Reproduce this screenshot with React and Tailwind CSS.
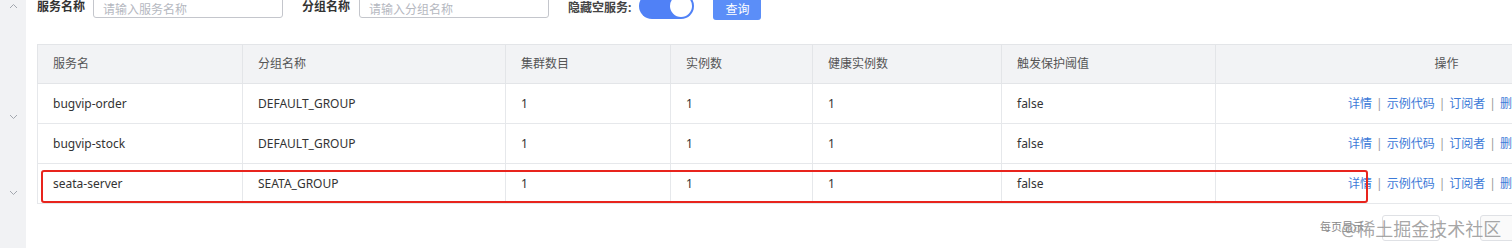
import React from 'react';

const COLS = [
  { key: 'name', label: '服务名', w: 'w-[205px]' },
  { key: 'group', label: '分组名称', w: 'w-[263px]' },
  { key: 'clusters', label: '集群数目', w: 'w-[165px]' },
  { key: 'instances', label: '实例数', w: 'w-[142px]' },
  { key: 'healthy', label: '健康实例数', w: 'w-[189px]' },
  { key: 'threshold', label: '触发保护阈值', w: 'w-[214px]' },
];

const ROWS = [
  { name: 'bugvip-order', group: 'DEFAULT_GROUP', clusters: 1, instances: 1, healthy: 1, threshold: 'false' },
  { name: 'bugvip-stock', group: 'DEFAULT_GROUP', clusters: 1, instances: 1, healthy: 1, threshold: 'false' },
  { name: 'seata-server', group: 'SEATA_GROUP', clusters: 1, instances: 1, healthy: 1, threshold: 'false' },
];

const Chevron = ({ up }) => (
  <svg width="9" height="6" viewBox="0 0 9 6" fill="none" stroke="#a3a7ae" strokeWidth="1">
    {up ? <path d="M1 5 L4.5 1.5 L8 5" /> : <path d="M1 1 L4.5 4.5 L8 1" />}
  </svg>
);

const Actions = () => (
  <div className="flex items-center justify-end gap-[4px] whitespace-nowrap text-[#3c7ad8]">
    <span>详情</span>
    <span className="text-[#999]">|</span>
    <span>示例代码</span>
    <span className="text-[#999]">|</span>
    <span>订阅者</span>
    <span className="text-[#999]">|</span>
    <span>删除</span>
  </div>
);

export default function App() {
  return (
    <div className="flex h-[248px] w-[1512px] overflow-hidden bg-white font-['Noto_Sans','Noto_Sans_CJK_SC',sans-serif] text-[12px] text-[#333]">
      {/* side menu strip */}
      <div className="flex w-[26px] shrink-0 flex-col items-center bg-[#f1f2f4]">
        <div className="mt-[3px]"><Chevron up /></div>
        <div className="mt-[105px]"><Chevron /></div>
        <div className="mt-[70px]"><Chevron /></div>
      </div>

      <div className="flex min-w-0 flex-1 flex-col pl-[11px]">
        {/* search bar */}
        <div className="-mt-[10px] flex h-[28px] items-center whitespace-nowrap">
          <span className="mt-[6px] mr-[8px] font-bold text-[#333]">服务名称</span>
          <div className="flex h-[28px] w-[190px] shrink-0 items-center rounded-[3px] border border-[#c4c6cc] px-[9px] pt-[12px] text-[#b5b8bf]">请输入服务名称</div>
          <span className="mt-[6px] mr-[9px] ml-[19px] font-bold">分组名称</span>
          <div className="flex h-[28px] w-[190px] shrink-0 items-center rounded-[3px] border border-[#c4c6cc] px-[9px] pt-[12px] text-[#b5b8bf]">请输入分组名称</div>
          <span className="mt-[8px] ml-[19px] mr-[8px] font-bold text-[#444]">隐藏空服务:</span>
          <div className="relative mt-[4px] h-[26px] w-[55px] shrink-0 rounded-full bg-[#5081f6]">
            <div className="absolute top-[2px] right-[2px] h-[22px] w-[22px] rounded-full bg-white" />
          </div>
          <div className="mt-[4px] ml-[19px] flex h-[27px] w-[48px] shrink-0 items-center justify-center rounded-[3px] bg-[#5b8ef8] pt-[8px] text-white">查询</div>
        </div>

        {/* table */}
        <div className="relative mt-[26px] w-[1640px]">
          <div className="flex h-[40px] border-y border-l border-[#e3e5e8] bg-[#f2f3f5] text-[#555]">
            {COLS.map(c => (
              <div key={c.key} className={`${c.w} flex items-center border-r border-[#e3e5e8] px-[15px]`}>{c.label}</div>
            ))}
            <div className="flex flex-1 items-center justify-center">操作</div>
          </div>
          {ROWS.map(r => (
            <div key={r.name} className="flex h-[40px] border-b border-l border-[#e6e8eb]">
              {COLS.map(c => (
                <div key={c.key} className={`${c.w} flex items-center border-r border-[#e6e8eb] px-[15px]`}>{r[c.key]}</div>
              ))}
              <div className="flex flex-1 items-center pl-[132px]">
                <Actions />
              </div>
            </div>
          ))}

          {/* highlight annotation */}
          <div className="absolute top-[126px] left-[4px] h-[33px] w-[1327px] rounded-[3px] border-2 border-[#e8241d]" />
        </div>

        {/* pagination */}
        <div className="relative flex h-[44px] items-center whitespace-nowrap pl-[1283px]">
          <span className="mt-[2px] mr-[18px] text-[11px] text-[#888]">每页显示</span>
          <div className="mt-[4px] h-[26px] w-[58px] shrink-0 rounded-[3px] border border-[#dfe1e5]" />
          <div className="mt-[4px] ml-[40px] h-[26px] w-[40px] shrink-0 rounded-l-[3px] border border-[#dfe1e5] bg-[#fafafa]" />
          <div className="absolute top-[13px] left-[1304px] text-[18px] leading-[24px] text-[#8f8f8f]/80">@稀土掘金技术社区</div>
        </div>
      </div>
    </div>
  );
}
